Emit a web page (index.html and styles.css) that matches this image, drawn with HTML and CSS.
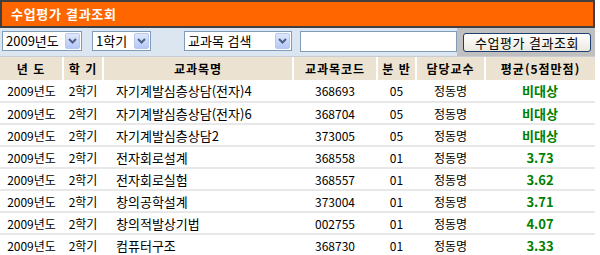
FILE: index.html
```html
<!DOCTYPE html>
<html lang="ko">
<head>
    <meta charset="UTF-8">
    <title>수업평가 결과조회</title>
    <link rel="stylesheet" href="styles.css">
</head>
<body>
    <div class="panel">
        <div class="title-bar">수업평가 결과조회</div>

        <div class="toolbar">
            <div class="toolbar-fields">
                <div class="select select-year">
                    <span>2009년도</span>
                    <span class="select-arrow"><svg width="9" height="6" viewBox="0 0 9 6"><path d="M1 1 L4.5 4.5 L8 1" fill="none" stroke="#4d6185" stroke-width="2"/></svg></span>
                </div>
                <div class="select select-term">
                    <span>1학기</span>
                    <span class="select-arrow"><svg width="9" height="6" viewBox="0 0 9 6"><path d="M1 1 L4.5 4.5 L8 1" fill="none" stroke="#4d6185" stroke-width="2"/></svg></span>
                </div>
                <div class="select select-search">
                    <span>교과목 검색</span>
                    <span class="select-arrow"><svg width="9" height="6" viewBox="0 0 9 6"><path d="M1 1 L4.5 4.5 L8 1" fill="none" stroke="#4d6185" stroke-width="2"/></svg></span>
                </div>
                <input type="text" class="search-input">
            </div>
            <div class="toolbar-action">
                <button class="btn">수업평가 결과조회</button>
            </div>
        </div>

        <table class="result-table">
            <colgroup>
                <col style="width:63px">
                <col style="width:40px">
                <col style="width:190px">
                <col style="width:84px">
                <col style="width:39px">
                <col style="width:69px">
                <col style="width:110px">
            </colgroup>
            <thead>
                <tr>
                    <th>년 도</th>
                    <th>학 기</th>
                    <th>교과목명</th>
                    <th>교과목코드</th>
                    <th>분 반</th>
                    <th>담당교수</th>
                    <th>평균(5점만점)</th>
                </tr>
            </thead>
            <tbody>
                <tr><td>2009년도</td><td>2학기</td><td class="name">자기계발심층상담(전자)4</td><td>368693</td><td>05</td><td>정동명</td><td class="score">비대상</td></tr>
                <tr><td>2009년도</td><td>2학기</td><td class="name">자기계발심층상담(전자)6</td><td>368704</td><td>05</td><td>정동명</td><td class="score">비대상</td></tr>
                <tr><td>2009년도</td><td>2학기</td><td class="name">자기계발심층상담2</td><td>373005</td><td>05</td><td>정동명</td><td class="score">비대상</td></tr>
                <tr><td>2009년도</td><td>2학기</td><td class="name">전자회로설계</td><td>368558</td><td>01</td><td>정동명</td><td class="score">3.73</td></tr>
                <tr><td>2009년도</td><td>2학기</td><td class="name">전자회로실험</td><td>368557</td><td>01</td><td>정동명</td><td class="score">3.62</td></tr>
                <tr><td>2009년도</td><td>2학기</td><td class="name">창의공학설계</td><td>373004</td><td>01</td><td>정동명</td><td class="score">3.71</td></tr>
                <tr><td>2009년도</td><td>2학기</td><td class="name">창의적발상기법</td><td>002755</td><td>01</td><td>정동명</td><td class="score">4.07</td></tr>
                <tr><td>2009년도</td><td>2학기</td><td class="name">컴퓨터구조</td><td>368730</td><td>01</td><td>정동명</td><td class="score">3.33</td></tr>
            </tbody>
        </table>
    </div>
</body>
</html>
```

FILE: styles.css
```css
* {
    margin: 0;
    padding: 0;
    box-sizing: border-box;
}

body {
    font-family: "Noto Sans CJK KR", "DejaVu Sans", sans-serif;
    font-size: 12px;
    color: #000;
    background: #fff;
}

.panel {
    width: 595px;
}

/* title */
.title-bar {
    height: 28px;
    background: #ff6600;
    border: 2px solid #404040;
    color: #fff;
    font-size: 13px;
    font-weight: bold;
    line-height: 23px;
    padding-left: 9px;
    letter-spacing: 0.7px;
}

/* search toolbar */
.toolbar {
    display: flex;
    height: 29px;
    background: #dce6f0;
    border-bottom: 1px solid #c8cdd4;
}

.toolbar-fields {
    display: flex;
    align-items: flex-start;
    padding: 3px 0 0 2px;
    flex: 1;
}

.select {
    display: flex;
    align-items: center;
    justify-content: space-between;
    height: 20px;
    background: #fff;
    border: 1px solid #7f9db9;
    padding: 0 1px 0 3px;
    font-size: 13px;
    line-height: 18px;
}

.select-year { width: 80px; margin-right: 10px; }
.select-term { width: 59px; margin-right: 33px; }
.select-search { width: 108px; margin-right: 8px; }

.select-arrow {
    display: flex;
    align-items: center;
    justify-content: center;
    width: 15px;
    height: 16px;
    border: 1px solid #b8c8ee;
    border-radius: 2px;
    background: linear-gradient(#dfe8fd, #b4c8f6);
}

.search-input {
    width: 157px;
    height: 21px;
    border: 1px solid #7f9db9;
    background: #fff;
}

.toolbar-action {
    width: 138px;
    background: #c0c0c0;
    padding: 5px 0 0 6px;
}

.btn {
    width: 128px;
    height: 19px;
    font-family: inherit;
    font-size: 13px;
    line-height: 15px;
    letter-spacing: 0.5px;
    border: 1px solid #1c3f6e;
    border-radius: 3px;
    background: linear-gradient(#ffffff, #ece9e0);
    color: #000;
}

/* results */
.result-table {
    width: 595px;
    border-collapse: collapse;
    table-layout: fixed;
}

.result-table th {
    height: 23px;
    background: #ebe2d1;
    border-right: 2px solid #fff;
    font-size: 12px;
    font-weight: bold;
    letter-spacing: 1px;
    text-align: center;
    line-height: 16px;
}

.result-table th:last-child {
    border-right: none;
}

.result-table td {
    height: 22px;
    border-bottom: 2px solid #e8e8e8;
    text-align: center;
    white-space: nowrap;
    line-height: 16px;
    padding-top: 1px;
}

.result-table td.name {
    text-align: left;
    padding-left: 13px;
    font-size: 13px;
}

.result-table td.score {
    color: #008000;
    font-weight: bold;
    font-size: 13px;
}
```
